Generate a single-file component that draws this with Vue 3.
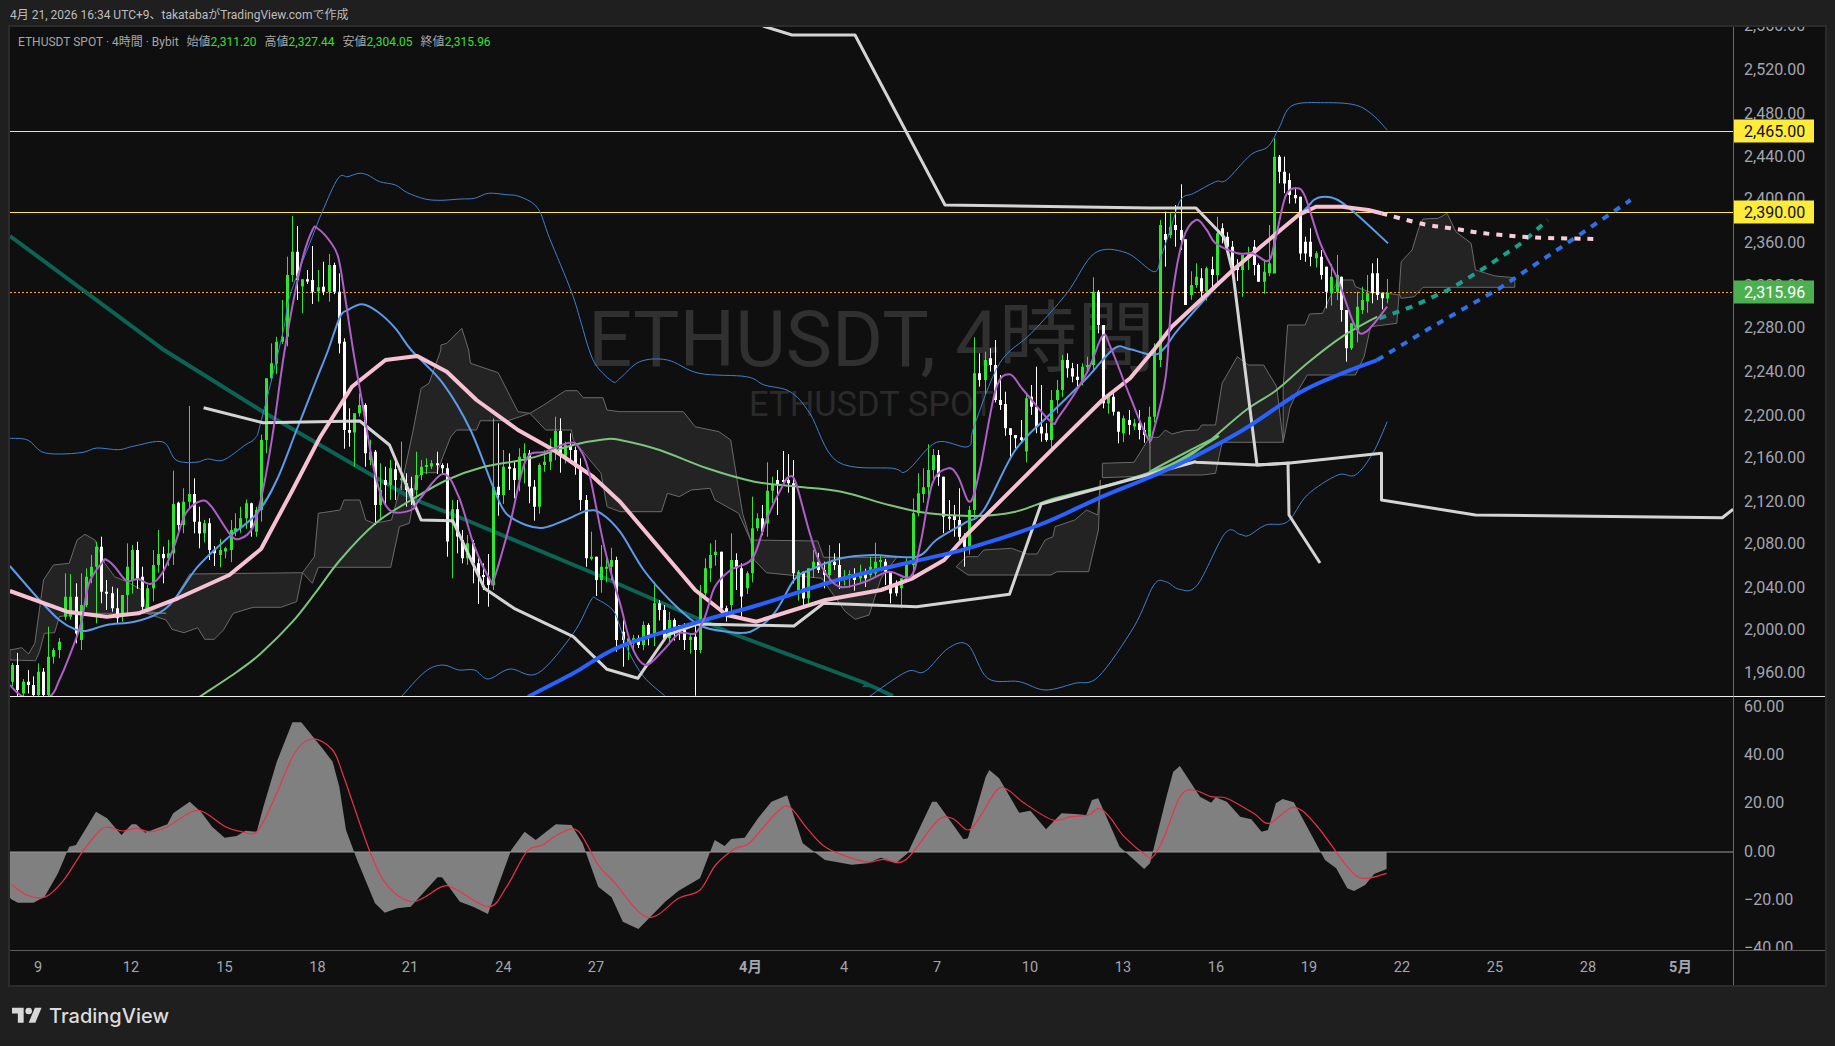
<script setup>
// crop frames the chart was traced in: page x/y = origin + value / scale
const Z1 = [0, 0, 2.529, 3]
const Z2 = [0, 350, 2.529, 3]
const Z3 = [620, 250, 2.529, 3]
const Z4 = [1150, 100, 2.289, 3]
const Z5 = [0, 690, 2.24, 3]
const Z6 = [700, 690, 2.24, 3]

const px = (f, x) => f[0] + x / f[2]
const py = (f, y) => f[1] + y / f[3]

function pts(...parts) {
  const out = []
  for (const [f, s] of parts) {
    for (const pair of s.trim().split(/\s+/)) {
      const [x, y] = pair.split(',').map(Number)
      out.push([px(f, x), py(f, y)])
    }
  }
  return out
}

const r = (n) => Math.round(n * 10) / 10
const straight = (p) => 'M' + p.map(([x, y]) => `${r(x)} ${r(y)}`).join('L')

function smooth(p) {
  let d = `M${r(p[0][0])} ${r(p[0][1])}`
  for (let i = 0; i < p.length - 1; i++) {
    const a = p[Math.max(i - 1, 0)]
    const b = p[i]
    const c = p[i + 1]
    const e = p[Math.min(i + 2, p.length - 1)]
    d += `C${r(b[0] + (c[0] - a[0]) / 6)} ${r(b[1] + (c[1] - a[1]) / 6)} ${r(c[0] - (e[0] - b[0]) / 6)} ${r(c[1] - (e[1] - b[1]) / 6)} ${r(c[0])} ${r(c[1])}`
  }
  return d
}

// candles: x,open,close[,high,low]
const candleData = [
  [Z2, `31,995,945 44,945,1020 57,1030,995 70,995,1005 83,1005,1035 96,1035,965 109,965,1035 122,1035,920,830 135,920,900 150,900,875
  165,800,740,670 178,800,740,672 191,740,850,700,880 204,870,765,670 217,765,680,655 230,680,650 243,650,590,575,820 256,590,725,560,760
  269,725,730,690,780 282,730,775,710,785 295,775,805,715,822 308,800,735,735,815 321,735,650,580,790 334,690,600,585 347,600,690,575
  360,680,770,650,780 373,775,715 386,715,645,600 399,645,612,540 412,612,625,590,700 425,625,610 438,610,462,362 451,458,525,455,555
  464,525,455,415 477,455,432,168,475 490,432,515,385,550 503,515,550,470,595 516,550,520,510 529,520,600,505,630 542,600,610,588,648
  557,615,600 570,605,595,590,625 583,600,540,510 595,545,535,490 608,535,505,470 621,505,460,448 634,460,535,458,560 647,545,480,470,560
  660,480,270 673,270,85,85,310 686,85,40,-20 699,40,-25 712,-25,-40,-150 725,-40,-225,-280 738,-225,-295,-402 751,-295,-210,-372,-150
  764,-190,-212,-212,-110 777,-212,-205,-240 790,-210,-175,-312,-138 805,-175,-188,-240,-145 818,-190,-175,-265 831,-175,-255,-288,-145
  844,-255,-175,-262 857,-175,-20,-230 870,-25,240,-35,296 883,240,248,175,290 896,248,190,190,350 909,190,165,130 922,165,310,160,350
  935,330,305 948,305,465,300,525 961,465,420,340,510 974,390,405,350,465 987,405,355,330,450 1000,358,390,325,450 1013,390,385,275,420
  1026,400,420,370,470 1039,415,440,380,465 1052,420,375,305,445 1065,375,350,330 1078,350,345,325 1091,350,340,330 1104,340,345,305,372
  1117,345,355,340,375 1130,355,575,340,620 1143,520,478,450,685 1156,478,560,450,610 1169,570,625,540,640 1182,625,580,555
  1195,580,640,570,700 1208,640,675,615,762 1221,675,680,640,720 1234,680,705,612,770 1247,705,410,205,720 1260,410,435,220,497
  1273,435,350,300 1286,350,355,310,420 1299,355,390,335,445 1312,390,320,295 1325,325,310,280,400 1338,310,410,300,460 1351,410,470,390,512
  1364,470,345,340 1377,345,335 1390,335,305,265 1403,305,243,200 1416,243,315,205,368 1429,325,285 1442,285,300,250,340 1455,300,350,290
  1468,350,450 1481,450,625,435 1494,625,620,545 1507,620,690,620,738 1520,690,650,585 1533,655,650,620 1546,650,630 1559,630,870,620,905`],
  [Z3, `7,1145,1170,1110,1250 20,1180,1165,1165,1230 33,1180,1165,1155,1200 46,1165,1185 59,1185,1125 72,1125,1155,1120 85,1155,1060,995
  98,1060,1080,1050 111,1080,1165,1065,1170 124,1165,1110 137,1110,1130,1105 150,1125,1140,1125,1170 163,1140,1170,1120,1200 176,1170,1160
  189,1160,1200,1120,1337 202,1200,1030,1005,1210 215,1030,955,925 228,955,915,880 241,915,905,870 255,905,1075,905,1100 268,1075,1095
  281,1065,930,850,1100 294,930,955,910,1020 307,955,1040,940,1100 320,1015,970 333,970,835,740 346,835,805,790 359,805,845,765 372,820,722,637
  385,722,705,680 398,690,705,660,795 411,690,695,603 424,690,700,612 437,700,970,630,1000 450,1020,965,960 463,965,1045,965,1070
  476,1045,955,955,1065 489,955,935,900 502,935,960 515,960,975,935,1015 528,975,935,885 541,935,945,910 554,945,985,880 567,985,978,960
  580,985,972 593,972,990 606,985,972 619,970,985 632,975,950 645,970,935,878 658,935,930,915 671,935,965 684,965,1030,965,1060 697,1000,1030
  710,1015,985,985,1075 723,985,945 740,945,790,745,990 753,790,730,670 766,732,712,655 779,712,660,583 792,660,615,597 805,615,680,600
  818,680,800,680,850 831,800,802,750,840 844,795,810,765,860 857,810,860,715,870 870,860,890,850,950 883,890,780,768 896,780,370,262
  909,370,390,310,410 922,390,330,305 935,325,345,295 948,345,450,270 961,450,465,375 974,462,535,425 987,535,555,535,625 1000,555,565,555,595
  1013,562,570,510,575 1026,605,445,430,637 1039,440,470,405 1052,470,530,350,550 1065,530,550,405,575 1078,550,570,520,575 1091,570,450,420
  1104,450,420,390 1117,420,330,315 1130,330,355,310 1143,355,380 1156,380,390 1169,395,350,340 1182,350,345,320 1195,345,125,82
  1208,125,225,120,250 1221,225,460,225,475 1234,460,440,430 1247,440,485,430 1260,485,545,485,580 1273,550,505 1286,510,525,480 1299,530,520
  1312,520,540,480 1325,540,555 1338,560,500,470,580 1351,500,300,280`],
  [Z4, `23,780,375 35,402,420,335,500 46,405,380,340 58,375,390,315,440 70,390,420,253,450 81,418,615,418,615 93,585,555 105,555,530,490
  117,535,575,505,600 129,575,505,500 141,508,525,470,570 153,525,400,350 165,385,410,370,430 177,410,440 187,440,510 199,495,510
  211,510,465,465,590 224,470,460,440 237,440,495,420 248,495,545,490,545 260,545,515 272,520,490,375 283,520,170,115,250 295,170,215,165,250
  307,215,250,170 319,240,285,220 331,285,295 343,290,460,290,480 355,425,460,410,485 367,425,470,385 379,475,460 391,470,525,450
  403,500,575,500,625 415,580,530 427,575,525,465,600 437,530,630,530,665 449,630,745,630,785 461,745,670,670,750 473,690,620,575
  485,630,600,560 497,605,580,525 508,520,580,490,610 520,520,585,475,600 532,580,595,580,628 543,595,578,537,610`],
]

let seed = 17
const rand = () => {
  seed = (seed * 16807) % 2147483647
  return seed / 2147483647
}

const candles = []
for (const [f, text] of candleData) {
  for (const item of text.trim().split(/\s+/)) {
    const [x, o, c, hi, lo] = item.split(',').map(Number)
    const open = py(f, o)
    const close = py(f, c)
    candles.push({
      x: Math.round(px(f, x)) + 0.5,
      open,
      close,
      high: hi !== undefined ? py(f, hi) : Math.min(open, close) - 2 - rand() * 12,
      low: lo !== undefined ? py(f, lo) : Math.max(open, close) + 2 + rand() * 12,
      up: close < open,
    })
  }
}

function candlePaths(up) {
  const list = candles.filter((c) => c.up === up)
  return {
    wick: list.map((c) => `M${c.x} ${r(c.high)}V${r(c.low)}`).join(''),
    body: list
      .map((c) => {
        const top = Math.min(c.open, c.close)
        const h = Math.max(Math.abs(c.open - c.close), 2)
        return `M${c.x - 1.5} ${r(top)}h3v${r(h)}h-3z`
      })
      .join(''),
  }
}
const greenCandles = candlePaths(true)
const whiteCandles = candlePaths(false)

// ichimoku cloud, traced lobe by lobe
const cloud = [
  pts([Z2, '25,900 55,893 72,912 88,880 110,690 135,645 175,640 195,570 215,553 240,570 265,640 290,680 320,695 360,720 370,785 420,790 370,790 200,790 150,800 138,848 112,850 100,905 90,932 25,930']),
  pts([Z2, '440,750 480,672 765,668 750,755 710,772 640,772 590,790 565,840 542,868 518,868 500,833 465,848 435,838 420,810 370,790']),
  pts([Z2, '765,668 795,620 805,490 860,480 870,450 910,450 925,510 945,520 990,510 1020,380 1045,240 1065,115 1085,100 1115,0 1115,-15 1130,-20 1168,-65 1185,0 1190,40 1260,68 1310,185 1340,190 1285,212 1215,212 1205,240 1155,240 1140,260 1120,320 1105,368 1065,368 1050,400 1040,490 1035,520 1010,530 988,652 805,652 790,700']),
  pts([Z2, '1340,190 1375,165 1430,122 1460,122 1475,143 1525,143 1535,180'], [Z3, '0,485 160,485 190,530 250,545 280,570 295,680 310,790 330,870 300,790 240,750 228,715 180,720 150,740 120,730 105,785 0,785'], [Z2, '1535,470 1520,370 1450,270 1445,240 1380,240']),
  pts([Z3, '330,870 500,873 515,922 700,922 660,985 630,1095 595,1108 570,1085 510,985 370,968 340,930']),
  pts([Z3, '850,950 875,920 905,920 920,900 990,895 1030,912 1055,912 1075,870 1095,860 1100,830 1150,810 1180,780 1208,795 1215,690 1210,840 1185,965 1105,965 1090,975 880,975']),
  pts([Z3, '1220,640 1300,637 1335,570 1340,561 1340,678 1220,683']),
  pts([Z4, '0,1012 20,1012 35,990 50,1002 80,992 110,990 118,975 150,975 165,850 200,770 225,795 260,795 290,860 305,1027 165,1027 150,1120 120,1125 0,1125']),
  pts([Z4, '305,1027 320,925 335,880 360,825 470,825 490,770 505,680 565,670 570,585 545,580 505,577 470,560 465,540 430,540 395,640 365,642 355,675 315,675 305,860']),
  pts([Z4, '570,580 575,485 600,450 615,385 625,357 660,355 680,340 700,395 735,430 745,510 790,528 835,533 835,562 625,562 605,590 575,595']),
].map((p) => straight(p) + 'Z')

const tealLine = straight([
  [10, 236], [164, 350], [265, 413], [411, 498], [466, 520], [593, 573], [731, 633], [865, 683], [893, 696],
])
const tealTip = straight(pts([Z3, '612,1312 622,1296 634,1310'])) + 'Z'

const bbUpper = smooth(pts(
  [Z2, '25,265 70,270 105,305 150,312 210,307 245,294 300,299 340,288 412,276 445,330 495,337 525,327 565,330 620,285 645,265 660,215'],
  [Z1, '715,1000 730,900 760,800 790,710 815,635 855,535 880,530 908,520 930,525 960,545 1000,555 1030,578 1075,597 1115,601 1165,597 1200,595 1235,580 1280,584 1315,590 1360,625 1390,715 1445,875 1470,970 1490,1050'],
  [Z2, '1510,50 1550,95 1568,85'],
  [Z3, '50,335 120,330 200,370 320,380 365,405 430,425 480,490 550,635 690,655 725,663 800,577 880,590 895,530 960,340 1040,250 1130,130 1200,10 1280,8 1350,65'],
  [Z4, '25,470 45,395 70,300 100,280 150,245 175,240 230,165 270,140 295,85 325,17 400,8 470,15 510,45 543,90'],
))
const bbLowerA = smooth(pts(
  [Z2, '1015,1040 1075,965 1120,945 1160,960 1200,960 1235,987 1290,957 1360,970 1450,850 1495,750 1510,748 1550,780'],
  [Z3, '0,1130 20,1200 60,1280 113,1337'],
))
const bbLowerB = smooth(pts(
  [Z3, '630,1340 725,1265 770,1265 830,1195 880,1185 930,1285 1010,1295 1075,1320 1150,1300 1210,1280 1300,1130 1350,1005 1380,995 1415,1018 1460,1005 1530,850 1568,853'],
  [Z4, '225,1307 265,1275 315,1265 360,1185 430,1125 470,1125 510,1060 543,965'],
))
const bbMiddle = smooth(pts(
  [Z2, '25,648 100,750 150,810 190,838 220,842 270,825 340,815 400,790 440,750 500,650 570,570 650,490 700,390 750,240 800,90 830,0'],
  [Z1, '860,950 880,930 915,913 955,935 1000,985 1040,1050'],
  [Z2, '1120,100 1190,240 1250,420 1280,490 1330,525 1375,533 1430,510 1485,482 1520,490 1568,545'],
  [Z3, '60,960 130,1055 200,1125 270,1145 330,1145 390,1090 440,990 480,960 560,925 640,915 750,920 800,870 870,820 920,780 1000,600 1090,490 1180,385 1250,295 1290,298 1350,315 1380,290'],
  [Z4, '70,680 190,510 345,340 375,300 400,290 430,300 470,340 545,430'],
))
const maGreen = smooth(pts(
  [Z2, '505,1040 600,965 660,910 740,815 800,725 860,630 950,520 1040,450 1130,390 1220,352 1340,325 1450,285 1530,268'],
  [Z3, '0,570 100,600 220,655 340,695 450,710 560,725 680,765 780,790 900,798 1000,785 1100,745 1250,700 1380,650 1450,605 1510,560'],
  [Z4, '0,1115 60,1090 120,1040 220,930 290,870 360,790 440,710 520,650'],
))
const maGreenDash = straight(pts([Z4, '525,655 600,620 690,565 770,500 850,430 910,360']))
const maPink = straight(pts(
  [Z2, '25,723 100,755 170,785 270,800 350,790 450,745 580,675 660,597 740,420 810,260 890,110 975,30 1055,18 1130,65 1205,150 1310,240 1400,300 1500,380'],
  [Z3, '0,755 190,1020 270,1095 345,1115 520,1050 660,1020 740,985 820,930 880,850 1100,590 1220,450 1290,385 1350,300'],
  [Z4, '50,680 190,510 340,345 380,320 440,320 500,330 530,340'],
))
const maPinkDash = smooth(pts([Z4, '530,340 625,372 700,387 765,400 850,410 910,414 1015,417']))
const maBlue = smooth(pts(
  [Z2, '1335,1040 1450,970 1568,890'],
  [Z3, '200,1115 350,1065 550,990 740,935 880,895 1060,825 1210,745 1400,650 1568,545'],
  [Z4, '340,880 430,825 520,780'],
))
const maBlueDash = straight(pts([Z4, '520,780 640,685 800,565 960,425 1100,300']))
const purple = smooth(pts(
  [Z2, '25,1005 60,1040 125,1040 150,990 175,920 205,820 225,700 260,635 270,630 290,650 320,692 350,687 380,702 410,670 440,590 470,490 510,452 535,470 580,550 605,567 640,530 665,420 690,250 720,0'],
  [Z1, '760,800 790,690 805,687 835,725 855,770 870,870 893,1050'],
  [Z2, '915,150 950,380 985,480 1040,480 1060,450 1120,372 1160,440 1200,590 1240,690 1250,685 1290,520 1330,330 1380,305 1440,278 1465,295 1490,370 1530,600'],
  [Z3, '0,1060 30,1190 65,1245 110,1200 150,1150 190,1150 215,1100 240,1010 280,960 335,925 370,810 410,710 428,680 445,700 480,850 510,950 555,1010 620,995 680,965 735,980 760,880 790,700 830,655 855,680 885,755 910,660 950,420 985,373 1020,420 1090,515 1110,500 1180,370 1220,258 1240,290 1290,440 1335,565 1350,540 1380,380'],
  [Z4, '50,600 75,420 105,360 130,390 150,430 200,460 235,460 270,483 285,430 310,290 335,265 355,290 390,430 430,540 470,680 495,695 543,620'],
))
const zigA = straight(pts(
  [Z2, '515,173 665,218 910,213 985,285 1065,510 1145,512 1225,715 1300,775 1450,860 1535,958'],
  [Z3, '45,1285 120,1155 195,1122 440,1128 515,1060 750,1070 985,1033 1065,762 1455,635'],
  [Z4, '105,1087 245,1095 315,1090 530,1060 530,1200 745,1245 1310,1253 1335,1228'],
))
const zigB = straight([
  [763, 26], [792, 35], [855, 35], [945, 205], [1150, 208], [1196, 208], [1224, 237], [1233, 273], [1257, 465], [1288, 463], [1289, 515], [1320, 563],
])

// indicator pane
const BASE = 852
const areaTop = pts(
  [Z5, '10,600 25,628 40,638 75,638 100,620 130,550 155,470 170,465 215,365 240,385 272,435 295,403 305,403 325,428 375,403 388,370 425,335 450,365 475,410 503,443 530,438 550,422 575,425 590,350 620,215 655,97 675,97 725,180 745,215 760,290 775,420 800,510 840,640 862,668 890,655 920,650 980,562 990,562 1030,635 1060,650 1093,672 1145,480 1175,425 1200,450 1245,403 1280,405 1305,460 1340,590 1370,622 1395,695 1430,717 1450,690 1490,635 1520,602'],
  [Z6, '0,565 33,450 55,468 70,447 100,443 130,385 160,335 195,316 230,460 280,510 340,524 375,520 405,503 440,518 465,490 520,335 530,335 590,448 600,445 640,260 648,240 670,265 715,368 740,362 775,418 810,370 840,372 865,375 878,330 892,325 940,470 995,537 1008,520 1045,320 1060,245 1075,228 1120,320 1145,338 1155,322 1180,335 1210,380 1235,388 1258,425 1272,420 1290,340 1305,327 1330,337 1400,510 1425,535 1450,595 1465,603 1490,585 1510,552 1538,537'],
)
const area = `${straight(areaTop)}L${r(areaTop[areaTop.length - 1][0])} ${BASE}L${r(areaTop[0][0])} ${BASE}Z`
const signal = smooth(pts(
  [Z5, '25,583 60,615 100,622 140,575 185,485 225,420 245,412 275,423 305,415 335,425 375,410 425,368 455,365 505,410 540,425 575,425 610,340 660,190 700,147 745,180 770,260 830,490 870,590 925,635 990,590 1020,597 1095,650 1135,590 1180,485 1215,465 1255,430 1295,423 1340,525 1375,575 1450,682 1520,625'],
  [Z6, '0,600 35,525 80,475 110,460 170,370 200,350 240,415 285,475 370,515 410,508 460,510 530,395 565,385 600,420 625,385 665,300 690,300 725,338 790,390 830,380 870,375 895,355 920,385 950,440 1000,497 1015,500 1040,440 1075,320 1105,300 1145,320 1180,325 1240,370 1275,400 1330,352 1380,405 1450,530 1485,565 1538,550'],
))

// axes (tops are page y minus the pane's top)
const MAIN_TOP = 27
const IND_TOP = 697
const priceTicks = [
  ['2,560.00', 26], ['2,520.00', 69.5], ['2,480.00', 114], ['2,440.00', 156.7], ['2,400.00', 199], ['2,360.00', 242.7],
  ['2,320.00', 285.5], ['2,280.00', 328], ['2,240.00', 371.7], ['2,200.00', 415.7], ['2,160.00', 458], ['2,120.00', 501.7],
  ['2,080.00', 544], ['2,040.00', 587.5], ['2,000.00', 630], ['1,960.00', 673],
].map(([label, y]) => ({ label, top: y - MAIN_TOP }))
const priceTags = [
  { label: '2,465.00', top: 131 - MAIN_TOP, kind: 'tag-yellow' },
  { label: '2,390.00', top: 212 - MAIN_TOP, kind: 'tag-yellow' },
  { label: '2,315.96', top: 292 - MAIN_TOP, kind: 'tag-green' },
]
const indTicks = [
  ['60.00', 706.7], ['40.00', 754.7], ['20.00', 803.3], ['0.00', 852], ['−20.00', 899.5], ['−40.00', 947.7],
].map(([label, y]) => ({ label, top: y - IND_TOP }))
// the 1st of a month takes the next slot and the tick before it is dropped
const timeTicks = [
  ['9', 38], ['12', 131], ['15', 224.5], ['18', 317.5], ['21', 410], ['24', 503.5], ['27', 596], ['4月', 750.5], ['4', 844],
  ['7', 937], ['10', 1030], ['13', 1123], ['16', 1216], ['19', 1309], ['22', 1402], ['25', 1495], ['28', 1588], ['5月', 1680.5],
].map(([label, x]) => ({ label, left: x - 10, bold: label.includes('月') }))
</script>

<template>
  <div class="page">
    <div class="title">4月 21, 2026 16:34 UTC+9、takatabaがTradingView.comで作成</div>

    <div class="chart">
      <div class="plot main">
        <div class="watermark">
          <div class="wm-big">ETHUSDT, 4時間</div>
          <div class="wm-small">ETHUSDT SPOT</div>
        </div>
        <svg class="canvas" width="1723" height="669" viewBox="10 27 1723 669">
          <path v-for="(d, i) in cloud" :key="i" :d="d" class="cloud" />
          <path d="M10 131.5H1733M10 212.5H1733" class="hline" />
          <path d="M10 292.5H1733" class="last-line" />
          <path :d="tealLine" class="teal" />
          <path :d="tealTip" class="teal-tip" />
          <path :d="greenCandles.wick" class="wick-green" />
          <path :d="greenCandles.body" class="body-green" />
          <path :d="whiteCandles.wick" class="wick-white" />
          <path :d="whiteCandles.body" class="body-white" />
          <path :d="bbUpper" class="bb" />
          <path :d="bbLowerA" class="bb" />
          <path :d="bbLowerB" class="bb" />
          <path :d="bbMiddle" class="bb-mid" />
          <path :d="maGreen" class="ma-green" />
          <path :d="maGreenDash" class="dash-teal" />
          <path :d="zigA" class="zig" />
          <path :d="zigB" class="zig" />
          <path :d="maPink" class="ma-pink" />
          <path :d="maPinkDash" class="dash-pink" />
          <path :d="maBlue" class="ma-blue" />
          <path :d="maBlueDash" class="dash-blue" />
          <path :d="purple" class="purple" />
        </svg>
        <div class="legend">
          <span>ETHUSDT SPOT · 4時間 · Bybit</span>
          <span class="ohlc">始値<b>2,311.20</b></span>
          <span class="ohlc">高値<b>2,327.44</b></span>
          <span class="ohlc">安値<b>2,304.05</b></span>
          <span class="ohlc">終値<b>2,315.96</b></span>
        </div>
      </div>
      <div class="axis main">
        <span v-for="t in priceTicks" :key="t.label" class="tick" :style="{ top: t.top + 'px' }">{{ t.label }}</span>
        <span v-for="t in priceTags" :key="t.label" class="tag" :class="t.kind" :style="{ top: t.top + 'px' }">{{ t.label }}</span>
      </div>

      <div class="plot ind">
        <svg class="canvas" width="1723" height="253" viewBox="10 697 1723 253">
          <path :d="area" class="area" />
          <path d="M10 852H1733" class="zero" />
          <path :d="signal" class="signal" />
        </svg>
      </div>
      <div class="axis ind">
        <span v-for="t in indTicks" :key="t.label" class="tick" :style="{ top: t.top + 'px' }">{{ t.label }}</span>
      </div>

      <div class="time-axis">
        <span v-for="t in timeTicks" :key="t.left" class="time" :class="{ bold: t.bold }" :style="{ left: t.left + 'px' }">{{ t.label }}</span>
      </div>
      <div class="corner"></div>
    </div>

    <div class="footer">
      <svg width="30" height="24" viewBox="0 0 36 28" fill="#d8d8d8">
        <path d="M14 22H7V11H0V4h14v18zM28 22h-8l7.5-18h8L28 22z" />
        <circle cx="20" cy="8" r="4" />
      </svg>
      <span class="brand">TradingView</span>
    </div>
  </div>
</template>

<style>
html,
body {
  margin: 0;
  background: #1f1f1f;
}
</style>

<style scoped>
.page {
  width: 1835px;
  height: 1046px;
  display: flex;
  flex-direction: column;
  background: #1f1f1f;
  font-family: Roboto, "Noto Sans CJK JP", sans-serif;
  overflow: hidden;
}
.title {
  height: 25px;
  padding: 4px 0 0 10px;
  box-sizing: border-box;
  font-size: 12px;
  line-height: 22px;
  color: #bdbdbd;
  white-space: nowrap;
}
.chart {
  width: 1815px;
  height: 958px;
  margin-left: 8px;
  border: 2px solid #2b2b2b;
  background: #0f0f0f;
  display: grid;
  grid-template-columns: 1723px 92px;
  grid-template-rows: 670px 254px 34px;
}
.plot {
  position: relative;
  overflow: hidden;
}
.plot.main,
.axis.main {
  border-bottom: 1px solid #f2f2f2;
}
.plot.ind,
.axis.ind {
  border-bottom: 1px solid #5a5a5a;
}
.canvas {
  position: relative;
  display: block;
}
.watermark {
  position: absolute;
  inset: 0 0 4px;
  display: flex;
  flex-direction: column;
  align-items: center;
  justify-content: center;
  white-space: nowrap;
}
.wm-big {
  font-size: 78px;
  line-height: 88px;
  color: #303030;
}
.wm-small {
  font-size: 34.5px;
  line-height: 40px;
  color: #2a2a2a;
}
.legend {
  position: absolute;
  left: 8px;
  top: 6px;
  display: flex;
  gap: 8px;
  font-size: 12px;
  line-height: 18px;
  color: #a6a6a6;
  white-space: nowrap;
}
.ohlc b {
  font-weight: 400;
  color: #33e033;
}
.axis {
  position: relative;
  overflow: hidden;
  border-left: 1px solid #6a6a6a;
  font-size: 16px;
  color: #a3a6af;
}
.tick,
.tag {
  position: absolute;
  transform: translateY(-50%);
  white-space: nowrap;
}
.tick {
  left: 10px;
  line-height: 20px;
}
.tag {
  left: 0;
  width: 80px;
  height: 23px;
  padding-left: 10px;
  box-sizing: border-box;
  line-height: 23px;
}
.tag-yellow {
  background: #ffeb3b;
  color: #111;
}
.tag-green {
  background: #4caf50;
  color: #fff;
}
.time-axis {
  position: relative;
  font-size: 14.5px;
  color: #a3a6af;
}
.time {
  position: absolute;
  top: 8px;
  line-height: 18px;
  transform: translateX(-50%);
}
.time.bold {
  font-weight: 700;
}
.corner {
  border-left: 1px solid #6a6a6a;
}
.footer {
  flex: 1;
  display: flex;
  align-items: center;
  gap: 7px;
  padding: 0 0 2px 12px;
}
.brand {
  font-family: Inter, Roboto, sans-serif;
  font-size: 20px;
  font-weight: 500;
  color: #dcdcdc;
}
.cloud {
  fill: rgba(255, 255, 255, 0.085);
  stroke: #6a6a6a;
  stroke-width: 1;
}
.hline {
  fill: none;
  stroke: #ffeb3b;
  stroke-width: 1;
}
.last-line {
  fill: none;
  stroke: #ffa726;
  stroke-width: 1;
  stroke-dasharray: 2 2;
}
.teal {
  fill: none;
  stroke: #0c6353;
  stroke-width: 4;
}
.teal-tip {
  fill: #0c6353;
}
.wick-green {
  fill: none;
  stroke: #2ee62e;
  stroke-width: 1;
}
.wick-white {
  fill: none;
  stroke: #ffffff;
  stroke-width: 1;
}
.body-green {
  fill: #2ee62e;
}
.body-white {
  fill: #ffffff;
}
.bb {
  fill: none;
  stroke: #3f7fcf;
  stroke-width: 1;
}
.bb-mid {
  fill: none;
  stroke: #5b9bea;
  stroke-width: 2;
}
.ma-green {
  fill: none;
  stroke: #7cc57c;
  stroke-width: 2;
}
.dash-teal {
  fill: none;
  stroke: #17a18c;
  stroke-width: 4;
  stroke-dasharray: 7 7;
}
.zig {
  fill: none;
  stroke: #d4d4d4;
  stroke-width: 3;
  stroke-linejoin: round;
}
.ma-pink {
  fill: none;
  stroke: #f7c1d3;
  stroke-width: 4;
  stroke-linejoin: round;
}
.dash-pink {
  fill: none;
  stroke: #f9cdd8;
  stroke-width: 4;
  stroke-dasharray: 6 7;
}
.ma-blue {
  fill: none;
  stroke: #2962ff;
  stroke-width: 4;
}
.dash-blue {
  fill: none;
  stroke: #2f6fe8;
  stroke-width: 4;
  stroke-dasharray: 7 7;
}
.purple {
  fill: none;
  stroke: #ae5fc8;
  stroke-width: 2;
}
.area {
  fill: #808080;
}
.zero {
  fill: none;
  stroke: #9a9a9a;
  stroke-width: 1;
}
.signal {
  fill: none;
  stroke: #e8334a;
  stroke-width: 1.2;
}
</style>
